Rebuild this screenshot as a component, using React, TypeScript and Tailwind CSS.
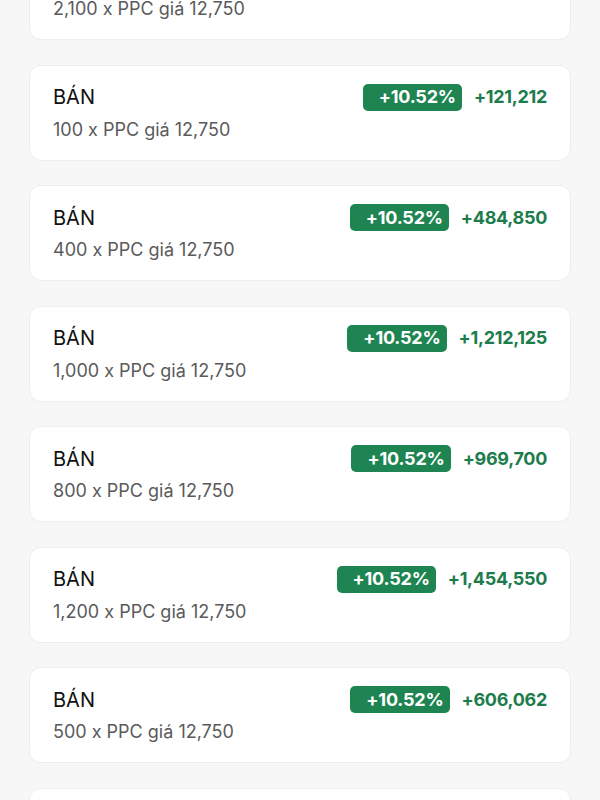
import React from "react";

type Trade = {
  side: string;
  qty: string;
  pct: string;
  profit: string;
};

const trades: Trade[] = [
  { side: "BÁN", qty: "2,100", pct: "+10.52%", profit: "+2,545,452" },
  { side: "BÁN", qty: "100", pct: "+10.52%", profit: "+121,212" },
  { side: "BÁN", qty: "400", pct: "+10.52%", profit: "+484,850" },
  { side: "BÁN", qty: "1,000", pct: "+10.52%", profit: "+1,212,125" },
  { side: "BÁN", qty: "800", pct: "+10.52%", profit: "+969,700" },
  { side: "BÁN", qty: "1,200", pct: "+10.52%", profit: "+1,454,550" },
  { side: "BÁN", qty: "500", pct: "+10.52%", profit: "+606,062" },
  { side: "BÁN", qty: "300", pct: "+10.52%", profit: "+363,637" },
];

function TradeCard({ trade }: { trade: Trade }) {
  return (
    <div className="h-[96px] shrink-0 rounded-[12px] border border-[#eeeeee] bg-white px-[23px] pt-[18px]">
      <div className="flex h-[27px] items-center justify-between">
        <span className="text-[20px] leading-none text-[#111]">{trade.side}</span>
        <div className="flex items-center gap-[12px]">
          <span className="flex h-[27px] items-center rounded-[5px] bg-[#1e8552] pl-[16px] pr-[6px] text-[18px] font-bold leading-none tracking-[-0.2px] text-white">
            {trade.pct}
          </span>
          <span className="text-[18px] font-bold leading-none tracking-[-0.3px] text-[#1d7c4c]">
            {trade.profit}
          </span>
        </div>
      </div>
      <div className="mt-[7px] text-[18px] leading-[24px] text-[#5a5a5a]">
        {trade.qty} x PPC giá 12,750
      </div>
    </div>
  );
}

export default function App() {
  return (
    <div
      className="h-[800px] w-[600px] overflow-hidden bg-[#f7f7f7]"
      style={{ fontFamily: "Inter, 'Noto Sans', sans-serif" }}
    >
      <div className="mx-[29px] -mt-[56px] flex flex-col gap-[24.5px]">
        {trades.map((t, i) => (
          <TradeCard key={i} trade={t} />
        ))}
      </div>
    </div>
  );
}
